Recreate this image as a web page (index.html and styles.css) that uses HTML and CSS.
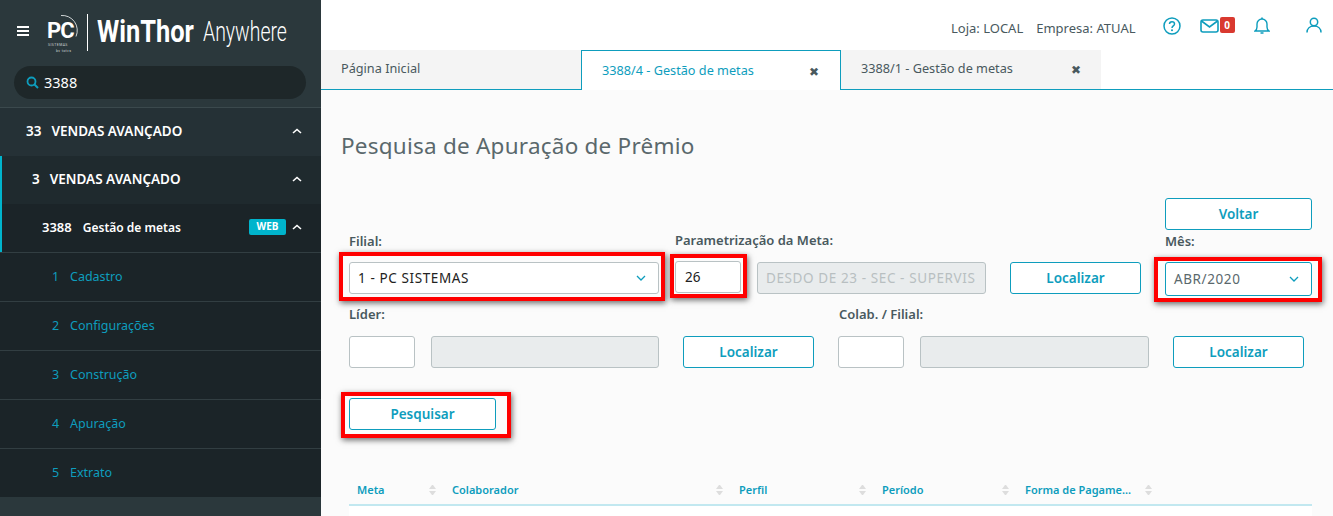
FILE: index.html
```html
<!DOCTYPE html>
<html lang="pt-BR">

<head>
    <meta charset="UTF-8">
    <meta name="viewport" content="width=device-width, initial-scale=1.0">
    <title>WinThor Anywhere</title>
    <link rel="stylesheet" href="styles.css">
</head>

<body>
    <!-- Sidebar -->
    <aside class="sidebar">
        <div class="brand">
            <svg class="burger" width="12" height="10" viewBox="0 0 12 10"><path d="M0 1h12M0 5h12M0 9h12" stroke="#fff" stroke-width="2"/></svg>
            <svg class="pc-logo" width="34" height="38" viewBox="0 0 34 38">
                <path d="M14 1.500a15 15 0 0 1 15 21" fill="none" stroke="#cfd4d5" stroke-width="1"/>
                <text class="logo-pc" x="0" y="24">PC</text>
                <text class="logo-small" x="1" y="32">SISTEMAS</text>
                <text class="logo-small" x="9" y="37.500">by totvs</text>
            </svg>
            <span class="brand-bar"></span>
            <span class="brand-name"><b>WinThor</b></span>
            <span class="brand-sub">Anywhere</span>
        </div>

        <div class="search">
            <svg width="13" height="13" viewBox="0 0 13 13"><circle cx="5.500" cy="5.500" r="4" fill="none" stroke="#0e9dbd" stroke-width="1.800"/><path d="M8.500 8.500l3.500 3.500" stroke="#0e9dbd" stroke-width="2"/></svg>
            <span>3388</span>
        </div>

        <div class="menu-item level-0">
            <span class="code">33</span><span class="label">VENDAS AVANÇADO</span>
            <svg class="caret" width="10" height="6" viewBox="0 0 10 6"><path d="M1 5l4-3.500L9 5" fill="none" stroke="#fff" stroke-width="1.600"/></svg>
        </div>
        <div class="menu-open">
            <div class="menu-item level-1">
                <span class="code">3</span><span class="label">VENDAS AVANÇADO</span>
                <svg class="caret" width="10" height="6" viewBox="0 0 10 6"><path d="M1 5l4-3.500L9 5" fill="none" stroke="#fff" stroke-width="1.600"/></svg>
            </div>
            <div class="menu-item level-2">
                <span class="code">3388</span><span class="label">Gestão de metas</span>
                <span class="web-tag">WEB</span>
                <svg class="caret" width="10" height="6" viewBox="0 0 10 6"><path d="M1 5l4-3.500L9 5" fill="none" stroke="#fff" stroke-width="1.600"/></svg>
            </div>
        </div>
        <div class="sub-item"><span>1</span>Cadastro</div>
        <div class="sub-item"><span>2</span>Configurações</div>
        <div class="sub-item"><span>3</span>Construção</div>
        <div class="sub-item"><span>4</span>Apuração</div>
        <div class="sub-item"><span>5</span>Extrato</div>
    </aside>

    <div class="content">
        <!-- Top bar -->
        <header class="topbar">
            <span class="top-text">Loja: LOCAL</span>
            <span class="top-text">Empresa: ATUAL</span>
            <svg class="top-help" width="18" height="18" viewBox="0 0 18 18"><circle cx="9" cy="9" r="8" fill="none" stroke="#0e9dbd" stroke-width="1.500"/><path d="M6.500 7c0-1.500 1-2.300 2.500-2.300s2.500.9 2.500 2.200c0 2-2.500 2-2.500 4" fill="none" stroke="#0e9dbd" stroke-width="1.500"/><circle cx="9" cy="13.300" r="1" fill="#0e9dbd"/></svg>
            <svg class="top-mail" width="19" height="14" viewBox="0 0 19 14"><rect x="1" y="1" width="17" height="12" rx="2" fill="none" stroke="#0e9dbd" stroke-width="1.600"/><path d="M1.500 2l8 6 8-6" fill="none" stroke="#0e9dbd" stroke-width="1.600"/></svg>
            <span class="mail-count">0</span>
            <svg class="top-bell" width="16" height="18" viewBox="0 0 16 18"><path d="M1 14c1.500-1 2-2 2-4V7a5 5 0 0 1 10 0v3c0 2 .5 3 2 4z" fill="none" stroke="#0e9dbd" stroke-width="1.400"/><path d="M6.500 16h3M8 .500v1.500" stroke="#0e9dbd" stroke-width="1.600"/></svg>
            <svg class="top-user" width="16" height="16" viewBox="0 0 16 16"><circle cx="8" cy="5" r="3.700" fill="none" stroke="#0e9dbd" stroke-width="1.500"/><path d="M1 15.500c0-4 3-6.500 7-6.500s7 2.500 7 6.500" fill="none" stroke="#0e9dbd" stroke-width="1.500"/></svg>
        </header>

        <!-- Tabs -->
        <nav class="tabs">
            <div class="tab tab-home">Página Inicial</div>
            <div class="tab tab-active">3388/4 - Gestão de metas <span class="tab-close">✖</span></div>
            <div class="tab tab-other">3388/1 - Gestão de metas <span class="tab-close">✖</span></div>
        </nav>

        <main class="page">
            <h1>Pesquisa de Apuração de Prêmio</h1>

            <div class="row-back">
                <button class="btn btn-month">Voltar</button>
            </div>

            <div class="form-row row-one">
                <div class="field field-filial">
                    <label>Filial:</label>
                    <div class="select">1 - PC SISTEMAS
                        <svg width="10" height="6" viewBox="0 0 10 6"><path d="M1 1l4 4 4-4" fill="none" stroke="#0e9dbd" stroke-width="1.300"/></svg>
                        <i class="mark mark-filial"></i>
                    </div>
                </div>
                <div class="field field-param">
                    <label>Parametrização da Meta:</label>
                    <div class="param-inputs">
                        <div class="input input-code input-26">26<i class="mark mark-code"></i></div>
                        <div class="input input-off input-desdo">DESDO DE 23 - SEC - SUPERVIS</div>
                    </div>
                </div>
                <button class="btn btn-find btn-find-param">Localizar</button>
                <div class="field field-month">
                    <label>Mês:</label>
                    <div class="select select-month">ABR/2020
                        <svg width="10" height="6" viewBox="0 0 10 6"><path d="M1 1l4 4 4-4" fill="none" stroke="#0e9dbd" stroke-width="1.300"/></svg>
                        <i class="mark mark-month"></i>
                    </div>
                </div>
            </div>

            <div class="form-row row-two">
                <div class="field field-lider">
                    <label>Líder:</label>
                    <div class="param-inputs">
                        <div class="input input-code"></div>
                        <div class="input input-off input-name"></div>
                    </div>
                </div>
                <button class="btn btn-find btn-find-lider">Localizar</button>
                <div class="field field-colab">
                    <label>Colab. / Filial:</label>
                    <div class="param-inputs">
                        <div class="input input-code"></div>
                        <div class="input input-off input-name-b"></div>
                    </div>
                </div>
                <button class="btn btn-find btn-find-colab">Localizar</button>
            </div>

            <div class="row-search">
                <button class="btn btn-search">Pesquisar<i class="mark mark-search"></i></button>
            </div>

            <div class="table-head">
                <div class="th">Meta<i class="sort"></i></div>
                <div class="th">Colaborador<i class="sort"></i></div>
                <div class="th">Perfil<i class="sort"></i></div>
                <div class="th">Período<i class="sort"></i></div>
                <div class="th">Forma de Pagame...<i class="sort"></i></div>
            </div>
            <div class="table-body"></div>
        </main>
    </div>
</body>

</html>
```

FILE: styles.css
```css
* {
    box-sizing: border-box;
    margin: 0;
    padding: 0;
}

html,
body {
    height: 516px;
    overflow: hidden;
}

body {
    font-family: "Noto Sans", "Open Sans", sans-serif;
    background-color: #fff;
    color: #49595e;
    display: flex;
}

/* Sidebar */
.sidebar {
    width: 321px;
    height: 516px;
    flex-shrink: 0;
    background-color: #2b383c;
    color: #fff;
}

.brand {
    height: 66px;
    display: flex;
    align-items: flex-start;
    padding-top: 13px;
    overflow: hidden;
}

.burger {
    margin: 13px 0 0 17px;
}

.pc-logo {
    margin: 1px 0 0 18px;
}

.logo-pc {
    font-family: Roboto, sans-serif;
    font-size: 22px;
    font-weight: 700;
    letter-spacing: -1px;
    fill: #fff;
}

.logo-small {
    font-family: Roboto, sans-serif;
    font-size: 3.500px;
    letter-spacing: 0.400px;
    fill: #cfd4d5;
}

.brand-bar {
    width: 1px;
    height: 37px;
    margin: 1px 0 0 6px;
    background-color: #fff;
}

.brand-name {
    display: inline-block;
    width: 97px;
    margin-left: 9px;
    font-family: Roboto, sans-serif;
    font-size: 31px;
    line-height: 38px;
    transform: scaleX(0.82);
    transform-origin: left;
    white-space: nowrap;
}

.brand-sub {
    display: inline-block;
    width: 85px;
    margin-left: 9px;
    font-family: Roboto, sans-serif;
    font-size: 27px;
    font-weight: 300;
    line-height: 39px;
    transform: scaleX(0.72);
    transform-origin: left;
    white-space: nowrap;
}

.search {
    width: 292px;
    height: 33px;
    margin: 0 0 8px 14px;
    padding-left: 12px;
    padding-bottom: 1px;
    display: flex;
    align-items: center;
    gap: 5px;
    border-radius: 17px;
    background-color: #1e2729;
    font-size: 14.500px;
}

.menu-item {
    display: flex;
    align-items: center;
    font-size: 13.500px;
    font-weight: 600;
    height: 49px;
    padding-right: 19px;
    padding-bottom: 2px;
}

.menu-item .caret {
    margin-left: auto;
}

.level-0 {
    padding-left: 26px;
    border-top: 1px solid #3b494d;
    background-color: #253136;
}

.level-0 .code {
    margin-right: 10px;
}

.menu-open {
    border-left: 2px solid #00b4cc;
}

.level-1 {
    height: 48px;
    padding-left: 30px;
    background-color: #1f2a2e;
}

.level-1 .code {
    margin-right: 10px;
}

.level-2 {
    height: 48px;
    padding-left: 40px;
    background-color: #1b2428;
    font-size: 12px;
}

.level-2 .code {
    margin-right: 11px;
    font-size: 13px;
}

.level-2 .caret {
    margin-left: 6px;
}

.web-tag {
    width: 37px;
    height: 16px;
    margin-left: auto;
    border-radius: 2px;
    background-color: #00b4cc;
    font-size: 10px;
    font-weight: 700;
    line-height: 14px;
    text-align: center;
}

.sub-item {
    height: 49px;
    padding-left: 52px;
    padding-bottom: 2px;
    display: flex;
    align-items: center;
    background-color: #1b2428;
    border-top: 1px solid #323e42;
    color: #0e9dbd;
    font-size: 12.500px;
}

.sub-item span {
    width: 18px;
}

/* Top bar and tabs */
.content {
    flex: 1;
    display: flex;
    flex-direction: column;
    min-width: 0;
}

.topbar {
    height: 50px;
    display: flex;
    align-items: flex-start;
    padding-top: 17px;
    flex-shrink: 0;
}

.top-text {
    margin-top: 3px;
    font-size: 13px;
    line-height: 17px;
}

.top-text:first-child {
    margin-left: 630px;
    margin-right: 13px;
}

.top-help {
    margin: 0 0 0 27px;
}

.top-mail {
    margin: 2px 0 0 19px;
}

.mail-count {
    width: 15px;
    height: 16px;
    margin-left: 1px;
    border-radius: 2px;
    background-color: #d9392f;
    color: #fff;
    font-size: 10px;
    font-weight: 700;
    line-height: 16px;
    text-align: center;
}

.top-bell {
    margin: 0 0 0 19px;
}

.top-user {
    margin: 0 0 0 36px;
}

.tabs {
    height: 40px;
    display: flex;
    flex-shrink: 0;
    border-bottom: 1px solid #0e9dbd;
    font-size: 12.700px;
}

.tab {
    height: 40px;
    padding-left: 20px;
    line-height: 37px;
    background-color: #f4f4f4;
    position: relative;
}

.tab-home {
    width: 260px;
    height: 39px;
}

.tab-active {
    width: 260px;
    padding-left: 20px;
    line-height: 39px;
    background-color: #fff;
    color: #0e9dbd;
    border: 1px solid #0e9dbd;
    border-bottom: none;
}

.tab-other {
    width: 260px;
    height: 39px;
    padding-left: 20px;
}

.tab-close {
    position: absolute;
    right: 20px;
    top: 1px;
    color: #49595e;
    font-size: 12px;
}

.tab-active .tab-close {
    right: 21px;
    top: 1px;
}

/* Page */
.page {
    flex: 1;
    padding: 0 21px 0 28px;
    background-color: #fbfbfb;
}

.page h1 {
    margin: 40px 0 0 -8px;
    font-size: 22.500px;
    font-weight: 400;
    line-height: 32px;
    letter-spacing: 0.230px;
    color: #5a686c;
}

.row-back {
    display: flex;
    justify-content: flex-end;
    margin-top: 36px;
}

.form-row {
    display: flex;
    align-items: flex-end;
}

.row-one {
    margin-top: 2px;
}

.row-two {
    margin-top: 11px;
}

.field label {
    display: block;
    font-size: 13px;
    font-weight: 600;
    line-height: 18px;
    margin-bottom: 12px;
}

.row-two .field label {
    margin-bottom: 13px;
}

.field-param label {
    margin-top: -1px;
    margin-bottom: 13px;
}

.select,
.input {
    height: 32px;
    padding-left: 8px;
    border: 1px solid #b9c2c4;
    border-radius: 3px;
    background-color: #fff;
    display: flex;
    align-items: center;
    font-size: 13.500px;
    letter-spacing: 0.600px;
    color: #222;
    position: relative;
}

.select svg {
    margin-left: auto;
    margin-right: 12px;
}

.field-filial {
    width: 310px;
}

.field-param {
    width: 311px;
    margin-left: 16px;
}

.param-inputs {
    display: flex;
    gap: 16px;
}

.input-code {
    width: 66px;
    flex-shrink: 0;
    padding-left: 9px;
    letter-spacing: 0;
}

.input-26 {
    top: -1px;
}

.input-off {
    background-color: #e9eced;
    color: #b8bfc1;
    white-space: nowrap;
    overflow: hidden;
}

.input-desdo {
    width: 229px;
}

.input-name {
    width: 228px;
}

.input-name-b {
    width: 229px;
}

.field-lider {
    width: 310px;
}

.field-colab {
    width: 311px;
    margin-left: 24px;
}

.field-colab label {
    padding-left: 1px;
}

.field-month {
    width: 147px;
    margin-left: 24px;
}

.select-month {
    height: 34px;
    margin-bottom: -2px;
    border-color: #0e9dbd;
    color: #5a686c;
}

.btn {
    height: 32px;
    border: 1px solid #0e9dbd;
    border-radius: 3px;
    background-color: #fff;
    color: #0e9dbd;
    font-family: inherit;
    font-size: 13.500px;
    font-weight: 600;
    position: relative;
}

.btn-month,
.btn-search {
    width: 147px;
}

.btn-find {
    width: 131px;
}

.btn-find-param {
    margin-left: 24px;
}

.btn-find-lider {
    margin-left: 24px;
}

.btn-find-colab {
    margin-left: 24px;
}

.row-search {
    margin-top: 30px;
}

/* Red marks drawn over the screenshot */
.mark {
    position: absolute;
    border: 4px solid #f00;
    box-shadow: 1px 2px 6px rgba(0, 0, 0, 0.6);
}

.mark-filial {
    top: -11px;
    left: -11px;
    right: -7px;
    bottom: -8px;
}

.mark-code {
    top: -8px;
    left: -6px;
    right: -7px;
    bottom: -6px;
}

.mark-month {
    top: -6px;
    left: -12px;
    right: -11px;
    bottom: -7px;
}

.mark-search {
    top: -7px;
    left: -9px;
    right: -16px;
    bottom: -9px;
}

/* Table header */
.table-head {
    display: grid;
    grid-template-columns: 95px 287px 143px 143px 143px 1fr;
    margin-top: 45px;
    height: 31px;
    align-items: center;
    border-bottom: 2px solid #c2e8f0;
}

.th {
    padding: 0 8px;
    display: flex;
    justify-content: space-between;
    align-items: center;
    font-size: 11px;
    font-weight: 600;
    color: #0e9dbd;
    white-space: nowrap;
}

.sort {
    width: 7px;
    display: block;
}

.sort::before,
.sort::after {
    content: "";
    display: block;
    border-left: 3.500px solid transparent;
    border-right: 3.500px solid transparent;
}

.sort::before {
    border-bottom: 4px solid #ddd;
    margin-bottom: 2px;
}

.sort::after {
    border-top: 4px solid #ddd;
}

.table-body {
    height: 30px;
    background-color: #fff;
}
```
